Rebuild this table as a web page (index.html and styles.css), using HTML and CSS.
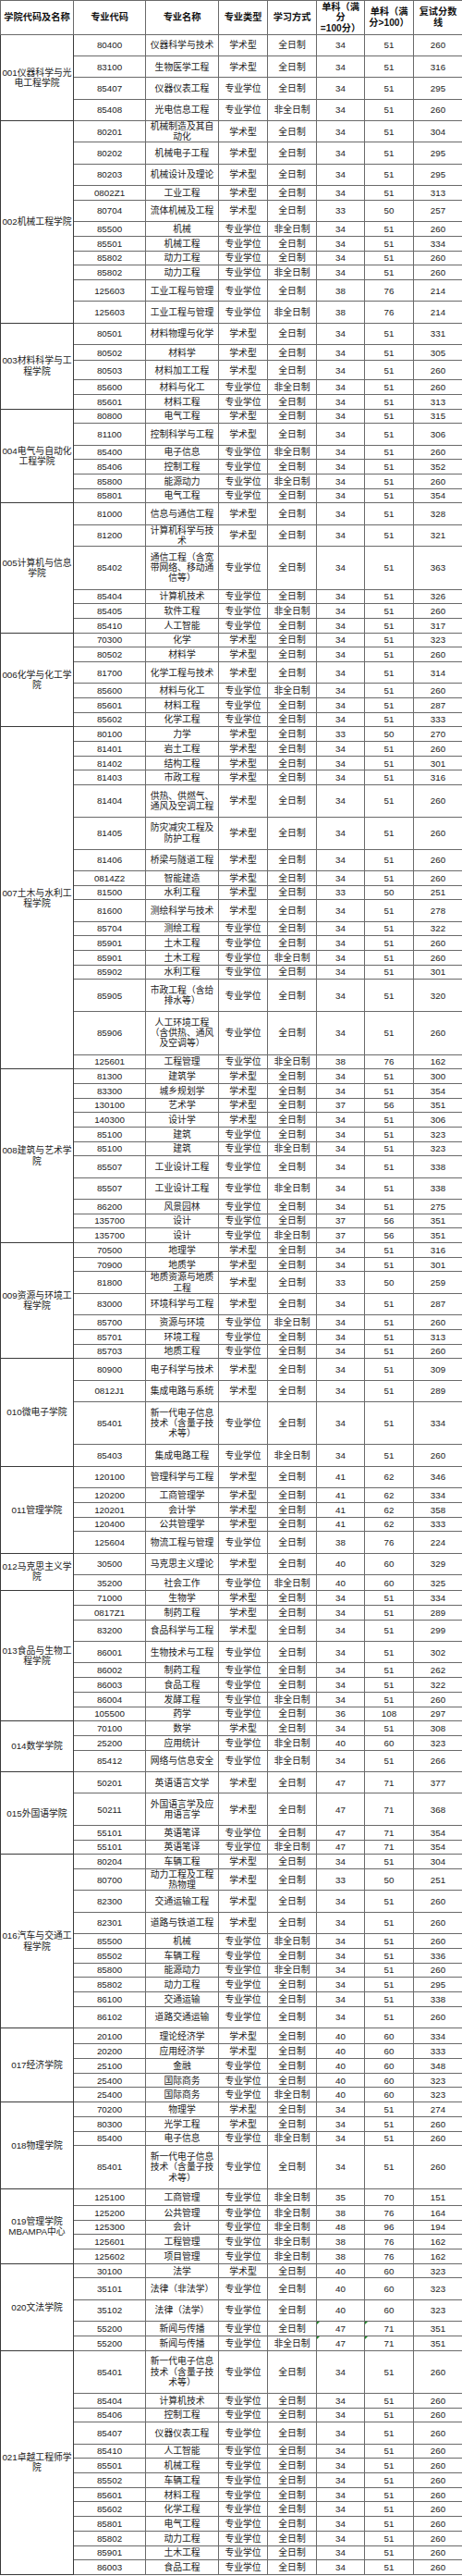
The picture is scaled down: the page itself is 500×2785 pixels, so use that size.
FILE: index.html
```html
<!DOCTYPE html>
<html lang="zh-CN">
<head>
<meta charset="utf-8">
<title>复试分数线</title>
<link rel="stylesheet" href="styles.css">
</head>
<body>
<table class="score">
<colgroup><col class="c-college"><col class="c-code"><col class="c-name"><col class="c-type"><col class="c-mode"><col class="c-s1"><col class="c-s2"><col class="c-total"></colgroup>
<thead>
<tr class="hd"><th>学院代码及名称</th><th>专业代码</th><th>专业名称</th><th>专业类型</th><th>学习方式</th><th>单科（满<br>分<br>=100分）</th><th>单科（满<br>分&gt;100）</th><th>复试分数<br>线</th></tr>
</thead>
<tbody>
<tr class="m"><td class="college" rowspan="4">001仪器科学与光<br>电工程学院</td><td>80400</td><td>仪器科学与技术</td><td>学术型</td><td>全日制</td><td>34</td><td>51</td><td>260</td></tr>
<tr class="m"><td>83100</td><td>生物医学工程</td><td>学术型</td><td>全日制</td><td>34</td><td>51</td><td>316</td></tr>
<tr class="m"><td>85407</td><td>仪器仪表工程</td><td>专业学位</td><td>全日制</td><td>34</td><td>51</td><td>295</td></tr>
<tr class="m"><td>85408</td><td>光电信息工程</td><td>专业学位</td><td>非全日制</td><td>34</td><td>51</td><td>260</td></tr>
</tbody>
<tbody>
<tr class="m"><td class="college" rowspan="11">002机械工程学院</td><td>80201</td><td>机械制造及其自<br>动化</td><td>学术型</td><td>全日制</td><td>34</td><td>51</td><td>304</td></tr>
<tr class="m"><td>80202</td><td>机械电子工程</td><td>学术型</td><td>全日制</td><td>34</td><td>51</td><td>295</td></tr>
<tr class="m"><td>80203</td><td>机械设计及理论</td><td>学术型</td><td>全日制</td><td>34</td><td>51</td><td>295</td></tr>
<tr class="s"><td>0802Z1</td><td>工业工程</td><td>学术型</td><td>全日制</td><td>34</td><td>51</td><td>313</td></tr>
<tr class="m"><td>80704</td><td>流体机械及工程</td><td>学术型</td><td>全日制</td><td>33</td><td>50</td><td>257</td></tr>
<tr class="s"><td>85500</td><td>机械</td><td>专业学位</td><td>非全日制</td><td>34</td><td>51</td><td>260</td></tr>
<tr class="s"><td>85501</td><td>机械工程</td><td>专业学位</td><td>全日制</td><td>34</td><td>51</td><td>334</td></tr>
<tr class="s"><td>85802</td><td>动力工程</td><td>专业学位</td><td>全日制</td><td>34</td><td>51</td><td>260</td></tr>
<tr class="s"><td>85802</td><td>动力工程</td><td>专业学位</td><td>非全日制</td><td>34</td><td>51</td><td>260</td></tr>
<tr class="m"><td>125603</td><td>工业工程与管理</td><td>专业学位</td><td>全日制</td><td>38</td><td>76</td><td>214</td></tr>
<tr class="m"><td>125603</td><td>工业工程与管理</td><td>专业学位</td><td>非全日制</td><td>38</td><td>76</td><td>214</td></tr>
</tbody>
<tbody>
<tr class="m"><td class="college" rowspan="5">003材料科学与工<br>程学院</td><td>80501</td><td>材料物理与化学</td><td>学术型</td><td>全日制</td><td>34</td><td>51</td><td>331</td></tr>
<tr class="t17"><td>80502</td><td>材料学</td><td>学术型</td><td>全日制</td><td>34</td><td>51</td><td>305</td></tr>
<tr class="t21"><td>80503</td><td>材料加工工程</td><td>学术型</td><td>全日制</td><td>34</td><td>51</td><td>260</td></tr>
<tr class="s"><td>85600</td><td>材料与化工</td><td>专业学位</td><td>非全日制</td><td>34</td><td>51</td><td>260</td></tr>
<tr class="s"><td>85601</td><td>材料工程</td><td>专业学位</td><td>全日制</td><td>34</td><td>51</td><td>313</td></tr>
</tbody>
<tbody>
<tr class="s"><td class="college" rowspan="6">004电气与自动化<br>工程学院</td><td>80800</td><td>电气工程</td><td>学术型</td><td>全日制</td><td>34</td><td>51</td><td>315</td></tr>
<tr class="m"><td>81100</td><td>控制科学与工程</td><td>学术型</td><td>全日制</td><td>34</td><td>51</td><td>306</td></tr>
<tr class="s"><td>85400</td><td>电子信息</td><td>专业学位</td><td>非全日制</td><td>34</td><td>51</td><td>260</td></tr>
<tr class="s"><td>85406</td><td>控制工程</td><td>专业学位</td><td>全日制</td><td>34</td><td>51</td><td>352</td></tr>
<tr class="s"><td>85800</td><td>能源动力</td><td>专业学位</td><td>非全日制</td><td>34</td><td>51</td><td>260</td></tr>
<tr class="s"><td>85801</td><td>电气工程</td><td>专业学位</td><td>全日制</td><td>34</td><td>51</td><td>354</td></tr>
</tbody>
<tbody>
<tr class="m"><td class="college" rowspan="6">005计算机与信息<br>学院</td><td>81000</td><td>信息与通信工程</td><td>学术型</td><td>全日制</td><td>34</td><td>51</td><td>328</td></tr>
<tr class="m"><td>81200</td><td>计算机科学与技<br>术</td><td>学术型</td><td>全日制</td><td>34</td><td>51</td><td>321</td></tr>
<tr class="x"><td>85402</td><td>通信工程（含宽<br>带网络、移动通<br>信等）</td><td>专业学位</td><td>全日制</td><td>34</td><td>51</td><td>363</td></tr>
<tr class="s"><td>85404</td><td>计算机技术</td><td>专业学位</td><td>全日制</td><td>34</td><td>51</td><td>326</td></tr>
<tr class="s"><td>85405</td><td>软件工程</td><td>专业学位</td><td>非全日制</td><td>34</td><td>51</td><td>260</td></tr>
<tr class="s"><td>85410</td><td>人工智能</td><td>专业学位</td><td>全日制</td><td>34</td><td>51</td><td>317</td></tr>
</tbody>
<tbody>
<tr class="s"><td class="college" rowspan="6">006化学与化工学<br>院</td><td>70300</td><td>化学</td><td>学术型</td><td>全日制</td><td>34</td><td>51</td><td>323</td></tr>
<tr class="s"><td>80502</td><td>材料学</td><td>学术型</td><td>全日制</td><td>34</td><td>51</td><td>260</td></tr>
<tr class="m"><td>81700</td><td>化学工程与技术</td><td>学术型</td><td>全日制</td><td>34</td><td>51</td><td>314</td></tr>
<tr class="s"><td>85600</td><td>材料与化工</td><td>专业学位</td><td>非全日制</td><td>34</td><td>51</td><td>260</td></tr>
<tr class="s"><td>85601</td><td>材料工程</td><td>专业学位</td><td>全日制</td><td>34</td><td>51</td><td>287</td></tr>
<tr class="s"><td>85602</td><td>化学工程</td><td>专业学位</td><td>全日制</td><td>34</td><td>51</td><td>333</td></tr>
</tbody>
<tbody>
<tr class="s"><td class="college" rowspan="17">007土木与水利工<br>程学院</td><td>80100</td><td>力学</td><td>学术型</td><td>全日制</td><td>33</td><td>50</td><td>270</td></tr>
<tr class="s"><td>81401</td><td>岩土工程</td><td>学术型</td><td>全日制</td><td>34</td><td>51</td><td>260</td></tr>
<tr class="s"><td>81402</td><td>结构工程</td><td>学术型</td><td>全日制</td><td>34</td><td>51</td><td>301</td></tr>
<tr class="s"><td>81403</td><td>市政工程</td><td>学术型</td><td>全日制</td><td>34</td><td>51</td><td>316</td></tr>
<tr class="l"><td>81404</td><td>供热、供燃气、<br>通风及空调工程</td><td>学术型</td><td>全日制</td><td>34</td><td>51</td><td>260</td></tr>
<tr class="l"><td>81405</td><td>防灾减灾工程及<br>防护工程</td><td>学术型</td><td>全日制</td><td>34</td><td>51</td><td>260</td></tr>
<tr class="m"><td>81406</td><td>桥梁与隧道工程</td><td>学术型</td><td>全日制</td><td>34</td><td>51</td><td>260</td></tr>
<tr class="s"><td>0814Z2</td><td>智能建造</td><td>学术型</td><td>全日制</td><td>34</td><td>51</td><td>260</td></tr>
<tr class="s"><td>81500</td><td>水利工程</td><td>学术型</td><td>全日制</td><td>33</td><td>50</td><td>251</td></tr>
<tr class="m"><td>81600</td><td>测绘科学与技术</td><td>学术型</td><td>全日制</td><td>34</td><td>51</td><td>278</td></tr>
<tr class="s"><td>85704</td><td>测绘工程</td><td>专业学位</td><td>全日制</td><td>34</td><td>51</td><td>322</td></tr>
<tr class="s"><td>85901</td><td>土木工程</td><td>专业学位</td><td>全日制</td><td>34</td><td>51</td><td>260</td></tr>
<tr class="s"><td>85901</td><td>土木工程</td><td>专业学位</td><td>非全日制</td><td>34</td><td>51</td><td>260</td></tr>
<tr class="s"><td>85902</td><td>水利工程</td><td>专业学位</td><td>全日制</td><td>34</td><td>51</td><td>301</td></tr>
<tr class="l"><td>85905</td><td>市政工程（含给<br>排水等）</td><td>专业学位</td><td>全日制</td><td>34</td><td>51</td><td>320</td></tr>
<tr class="x"><td>85906</td><td>人工环境工程<br>（含供热、通风<br>及空调等）</td><td>专业学位</td><td>全日制</td><td>34</td><td>51</td><td>260</td></tr>
<tr class="s"><td>125601</td><td>工程管理</td><td>专业学位</td><td>非全日制</td><td>38</td><td>76</td><td>162</td></tr>
</tbody>
<tbody>
<tr class="s"><td class="college" rowspan="11">008建筑与艺术学<br>院</td><td>81300</td><td>建筑学</td><td>学术型</td><td>全日制</td><td>34</td><td>51</td><td>300</td></tr>
<tr class="s"><td>83300</td><td>城乡规划学</td><td>学术型</td><td>全日制</td><td>34</td><td>51</td><td>354</td></tr>
<tr class="s"><td>130100</td><td>艺术学</td><td>学术型</td><td>全日制</td><td>37</td><td>56</td><td>351</td></tr>
<tr class="s"><td>140300</td><td>设计学</td><td>学术型</td><td>全日制</td><td>34</td><td>51</td><td>306</td></tr>
<tr class="s"><td>85100</td><td>建筑</td><td>专业学位</td><td>全日制</td><td>34</td><td>51</td><td>323</td></tr>
<tr class="s"><td>85100</td><td>建筑</td><td>专业学位</td><td>非全日制</td><td>34</td><td>51</td><td>323</td></tr>
<tr class="m"><td>85507</td><td>工业设计工程</td><td>专业学位</td><td>全日制</td><td>34</td><td>51</td><td>338</td></tr>
<tr class="m"><td>85507</td><td>工业设计工程</td><td>专业学位</td><td>非全日制</td><td>34</td><td>51</td><td>338</td></tr>
<tr class="s"><td>86200</td><td>风景园林</td><td>专业学位</td><td>全日制</td><td>34</td><td>51</td><td>275</td></tr>
<tr class="s"><td>135700</td><td>设计</td><td>专业学位</td><td>全日制</td><td>37</td><td>56</td><td>351</td></tr>
<tr class="s"><td>135700</td><td>设计</td><td>专业学位</td><td>非全日制</td><td>37</td><td>56</td><td>351</td></tr>
</tbody>
<tbody>
<tr class="s"><td class="college" rowspan="7">009资源与环境工<br>程学院</td><td>70500</td><td>地理学</td><td>学术型</td><td>全日制</td><td>34</td><td>51</td><td>316</td></tr>
<tr class="s"><td>70900</td><td>地质学</td><td>学术型</td><td>全日制</td><td>34</td><td>51</td><td>301</td></tr>
<tr class="m"><td>81800</td><td>地质资源与地质<br>工程</td><td>学术型</td><td>全日制</td><td>33</td><td>50</td><td>259</td></tr>
<tr class="m"><td>83000</td><td>环境科学与工程</td><td>学术型</td><td>全日制</td><td>34</td><td>51</td><td>287</td></tr>
<tr class="s"><td>85700</td><td>资源与环境</td><td>专业学位</td><td>非全日制</td><td>34</td><td>51</td><td>260</td></tr>
<tr class="s"><td>85701</td><td>环境工程</td><td>专业学位</td><td>全日制</td><td>34</td><td>51</td><td>313</td></tr>
<tr class="s"><td>85703</td><td>地质工程</td><td>专业学位</td><td>全日制</td><td>34</td><td>51</td><td>260</td></tr>
</tbody>
<tbody>
<tr class="m"><td class="college" rowspan="4">010微电子学院</td><td>80900</td><td>电子科学与技术</td><td>学术型</td><td>全日制</td><td>34</td><td>51</td><td>309</td></tr>
<tr class="m"><td>0812J1</td><td>集成电路与系统</td><td>学术型</td><td>全日制</td><td>34</td><td>51</td><td>289</td></tr>
<tr class="x"><td>85401</td><td>新一代电子信息<br>技术（含量子技<br>术等）</td><td>专业学位</td><td>全日制</td><td>34</td><td>51</td><td>334</td></tr>
<tr class="m"><td>85403</td><td>集成电路工程</td><td>专业学位</td><td>非全日制</td><td>34</td><td>51</td><td>260</td></tr>
</tbody>
<tbody>
<tr class="m"><td class="college" rowspan="5">011管理学院</td><td>120100</td><td>管理科学与工程</td><td>学术型</td><td>全日制</td><td>41</td><td>62</td><td>346</td></tr>
<tr class="s"><td>120200</td><td>工商管理学</td><td>学术型</td><td>全日制</td><td>41</td><td>62</td><td>334</td></tr>
<tr class="s"><td>120201</td><td>会计学</td><td>学术型</td><td>全日制</td><td>41</td><td>62</td><td>358</td></tr>
<tr class="s"><td>120400</td><td>公共管理学</td><td>学术型</td><td>全日制</td><td>41</td><td>62</td><td>333</td></tr>
<tr class="m"><td>125604</td><td>物流工程与管理</td><td>专业学位</td><td>全日制</td><td>38</td><td>76</td><td>224</td></tr>
</tbody>
<tbody>
<tr class="m"><td class="college" rowspan="2">012马克思主义学<br>院</td><td>30500</td><td>马克思主义理论</td><td>学术型</td><td>全日制</td><td>40</td><td>60</td><td>329</td></tr>
<tr class="t17"><td>35200</td><td>社会工作</td><td>专业学位</td><td>非全日制</td><td>40</td><td>60</td><td>325</td></tr>
</tbody>
<tbody>
<tr class="s"><td class="college" rowspan="8">013食品与生物工<br>程学院</td><td>71000</td><td>生物学</td><td>学术型</td><td>全日制</td><td>34</td><td>51</td><td>334</td></tr>
<tr class="s"><td>0817Z1</td><td>制药工程</td><td>学术型</td><td>全日制</td><td>34</td><td>51</td><td>289</td></tr>
<tr class="m"><td>83200</td><td>食品科学与工程</td><td>学术型</td><td>全日制</td><td>34</td><td>51</td><td>299</td></tr>
<tr class="m"><td>86001</td><td>生物技术与工程</td><td>专业学位</td><td>全日制</td><td>34</td><td>51</td><td>302</td></tr>
<tr class="s"><td>86002</td><td>制药工程</td><td>专业学位</td><td>全日制</td><td>34</td><td>51</td><td>262</td></tr>
<tr class="s"><td>86003</td><td>食品工程</td><td>专业学位</td><td>全日制</td><td>34</td><td>51</td><td>322</td></tr>
<tr class="s"><td>86004</td><td>发酵工程</td><td>专业学位</td><td>非全日制</td><td>34</td><td>51</td><td>260</td></tr>
<tr class="s"><td>105500</td><td>药学</td><td>专业学位</td><td>全日制</td><td>36</td><td>108</td><td>297</td></tr>
</tbody>
<tbody>
<tr class="s"><td class="college" rowspan="3">014数学学院</td><td>70100</td><td>数学</td><td>学术型</td><td>全日制</td><td>34</td><td>51</td><td>308</td></tr>
<tr class="s"><td>25200</td><td>应用统计</td><td>专业学位</td><td>非全日制</td><td>40</td><td>60</td><td>323</td></tr>
<tr class="m"><td>85412</td><td>网络与信息安全</td><td>专业学位</td><td>非全日制</td><td>34</td><td>51</td><td>266</td></tr>
</tbody>
<tbody>
<tr class="m"><td class="college" rowspan="4">015外国语学院</td><td>50201</td><td>英语语言文学</td><td>学术型</td><td>全日制</td><td>47</td><td>71</td><td>377</td></tr>
<tr class="l"><td>50211</td><td>外国语言学及应<br>用语言学</td><td>学术型</td><td>全日制</td><td>47</td><td>71</td><td>368</td></tr>
<tr class="s"><td>55101</td><td>英语笔译</td><td>专业学位</td><td>全日制</td><td>47</td><td>71</td><td>354</td></tr>
<tr class="s"><td>55101</td><td>英语笔译</td><td>专业学位</td><td>非全日制</td><td>47</td><td>71</td><td>354</td></tr>
</tbody>
<tbody>
<tr class="s"><td class="college" rowspan="10">016汽车与交通工<br>程学院</td><td>80204</td><td>车辆工程</td><td>学术型</td><td>全日制</td><td>34</td><td>51</td><td>304</td></tr>
<tr class="m"><td>80700</td><td>动力工程及工程<br>热物理</td><td>学术型</td><td>全日制</td><td>33</td><td>50</td><td>251</td></tr>
<tr class="m"><td>82300</td><td>交通运输工程</td><td>学术型</td><td>全日制</td><td>34</td><td>51</td><td>260</td></tr>
<tr class="m"><td>82301</td><td>道路与铁道工程</td><td>学术型</td><td>全日制</td><td>34</td><td>51</td><td>260</td></tr>
<tr class="s"><td>85500</td><td>机械</td><td>专业学位</td><td>非全日制</td><td>34</td><td>51</td><td>260</td></tr>
<tr class="s"><td>85502</td><td>车辆工程</td><td>专业学位</td><td>全日制</td><td>34</td><td>51</td><td>336</td></tr>
<tr class="s"><td>85800</td><td>能源动力</td><td>专业学位</td><td>非全日制</td><td>34</td><td>51</td><td>260</td></tr>
<tr class="s"><td>85802</td><td>动力工程</td><td>专业学位</td><td>全日制</td><td>34</td><td>51</td><td>295</td></tr>
<tr class="s"><td>86100</td><td>交通运输</td><td>专业学位</td><td>全日制</td><td>34</td><td>51</td><td>338</td></tr>
<tr class="m"><td>86102</td><td>道路交通运输</td><td>专业学位</td><td>全日制</td><td>34</td><td>51</td><td>260</td></tr>
</tbody>
<tbody>
<tr class="t17"><td class="college" rowspan="5">017经济学院</td><td>20100</td><td>理论经济学</td><td>学术型</td><td>全日制</td><td>40</td><td>60</td><td>334</td></tr>
<tr class="s"><td>20200</td><td>应用经济学</td><td>学术型</td><td>全日制</td><td>40</td><td>60</td><td>333</td></tr>
<tr class="s"><td>25100</td><td>金融</td><td>专业学位</td><td>全日制</td><td>40</td><td>60</td><td>348</td></tr>
<tr class="s"><td>25400</td><td>国际商务</td><td>专业学位</td><td>全日制</td><td>40</td><td>60</td><td>323</td></tr>
<tr class="s"><td>25400</td><td>国际商务</td><td>专业学位</td><td>非全日制</td><td>40</td><td>60</td><td>323</td></tr>
</tbody>
<tbody>
<tr class="s"><td class="college" rowspan="4">018物理学院</td><td>70200</td><td>物理学</td><td>学术型</td><td>全日制</td><td>34</td><td>51</td><td>274</td></tr>
<tr class="s"><td>80300</td><td>光学工程</td><td>学术型</td><td>全日制</td><td>34</td><td>51</td><td>260</td></tr>
<tr class="s"><td>85400</td><td>电子信息</td><td>专业学位</td><td>非全日制</td><td>34</td><td>51</td><td>260</td></tr>
<tr class="x"><td>85401</td><td>新一代电子信息<br>技术（含量子技<br>术等）</td><td>专业学位</td><td>全日制</td><td>34</td><td>51</td><td>260</td></tr>
</tbody>
<tbody>
<tr class="t18"><td class="college" rowspan="5">019管理学院<br>MBAMPA中心</td><td>125100</td><td>工商管理</td><td>专业学位</td><td>非全日制</td><td>35</td><td>70</td><td>151</td></tr>
<tr class="s"><td>125200</td><td>公共管理</td><td>专业学位</td><td>非全日制</td><td>38</td><td>76</td><td>164</td></tr>
<tr class="s"><td>125300</td><td>会计</td><td>专业学位</td><td>非全日制</td><td>48</td><td>96</td><td>194</td></tr>
<tr class="s"><td>125601</td><td>工程管理</td><td>专业学位</td><td>非全日制</td><td>38</td><td>76</td><td>162</td></tr>
<tr class="s"><td>125602</td><td>项目管理</td><td>专业学位</td><td>非全日制</td><td>38</td><td>76</td><td>162</td></tr>
</tbody>
<tbody>
<tr class="s"><td class="college" rowspan="5">020文法学院</td><td>30100</td><td>法学</td><td>学术型</td><td>全日制</td><td>40</td><td>60</td><td>323</td></tr>
<tr class="m"><td>35101</td><td>法律（非法学）</td><td>专业学位</td><td>全日制</td><td>40</td><td>60</td><td>323</td></tr>
<tr class="m"><td>35102</td><td>法律（法学）</td><td>专业学位</td><td>全日制</td><td>40</td><td>60</td><td>323</td></tr>
<tr class="s"><td>55200</td><td>新闻与传播</td><td>专业学位</td><td>全日制</td><td class="warn">47</td><td class="warn">71</td><td>351</td></tr>
<tr class="s"><td>55200</td><td>新闻与传播</td><td>专业学位</td><td>非全日制</td><td class="warn">47</td><td class="warn">71</td><td>351</td></tr>
</tbody>
<tbody>
<tr class="x"><td class="college" rowspan="13">021卓越工程师学<br>院</td><td>85401</td><td>新一代电子信息<br>技术（含量子技<br>术等）</td><td>专业学位</td><td>全日制</td><td>34</td><td>51</td><td>260</td></tr>
<tr class="s"><td>85404</td><td>计算机技术</td><td>专业学位</td><td>全日制</td><td>34</td><td>51</td><td>260</td></tr>
<tr class="s"><td>85406</td><td>控制工程</td><td>专业学位</td><td>全日制</td><td>34</td><td>51</td><td>260</td></tr>
<tr class="m"><td>85407</td><td>仪器仪表工程</td><td>专业学位</td><td>全日制</td><td>34</td><td>51</td><td>260</td></tr>
<tr class="s"><td>85410</td><td>人工智能</td><td>专业学位</td><td>全日制</td><td>34</td><td>51</td><td>260</td></tr>
<tr class="s"><td>85501</td><td>机械工程</td><td>专业学位</td><td>全日制</td><td>34</td><td>51</td><td>260</td></tr>
<tr class="s"><td>85502</td><td>车辆工程</td><td>专业学位</td><td>全日制</td><td>34</td><td>51</td><td>260</td></tr>
<tr class="s"><td>85601</td><td>材料工程</td><td>专业学位</td><td>全日制</td><td>34</td><td>51</td><td>260</td></tr>
<tr class="s"><td>85602</td><td>化学工程</td><td>专业学位</td><td>全日制</td><td>34</td><td>51</td><td>260</td></tr>
<tr class="s"><td>85801</td><td>电气工程</td><td>专业学位</td><td>全日制</td><td>34</td><td>51</td><td>260</td></tr>
<tr class="s"><td>85802</td><td>动力工程</td><td>专业学位</td><td>全日制</td><td>34</td><td>51</td><td>260</td></tr>
<tr class="s"><td>85901</td><td>土木工程</td><td>专业学位</td><td>全日制</td><td>34</td><td>51</td><td>260</td></tr>
<tr class="s"><td>86003</td><td>食品工程</td><td>专业学位</td><td>全日制</td><td>34</td><td>51</td><td>260</td></tr>
</tbody>
</table>
</body>
</html>
```

FILE: styles.css
```css
html, body {
  margin: 0;
  padding: 0;
  background: #ffffff;
}

.score {
  border-collapse: collapse;
  table-layout: fixed;
  width: 500px;
  font-family: "Liberation Sans", "Noto Sans CJK SC", sans-serif;
  font-size: 9.8px;
  line-height: 11.2px;
  color: #222222;
}

.c-college { width: 79px; }
.c-code { width: 78px; }
.c-name { width: 79px; }
.c-type { width: 53px; }
.c-mode { width: 53px; }
.c-s1 { width: 52px; }
.c-s2 { width: 53px; }
.c-total { width: 53px; }

.score th,
.score td {
  border: 1px solid #6a6a6a;
  padding: 0;
  text-align: center;
  vertical-align: middle;
  white-space: nowrap;
  overflow: visible;
}

.score th {
  font-weight: bold;
  font-size: 10.2px;
  line-height: 11.5px;
  color: #111111;
}

.score .college {
  border-color: #3a3a3a;
}

.hd { height: 36.7px; }
.s { height: 15.7px; }
.m { height: 23.35px; }
.l { height: 34.7px; }
.x { height: 46.5px; }
.t17 { height: 17.5px; }
.t18 { height: 18.3px; }
.t21 { height: 20.7px; }

.warn {
  position: relative;
}

.warn::before {
  content: "";
  position: absolute;
  left: 0;
  top: 0;
  border-top: 3px solid #1f8a2a;
  border-right: 3px solid transparent;
}
```
